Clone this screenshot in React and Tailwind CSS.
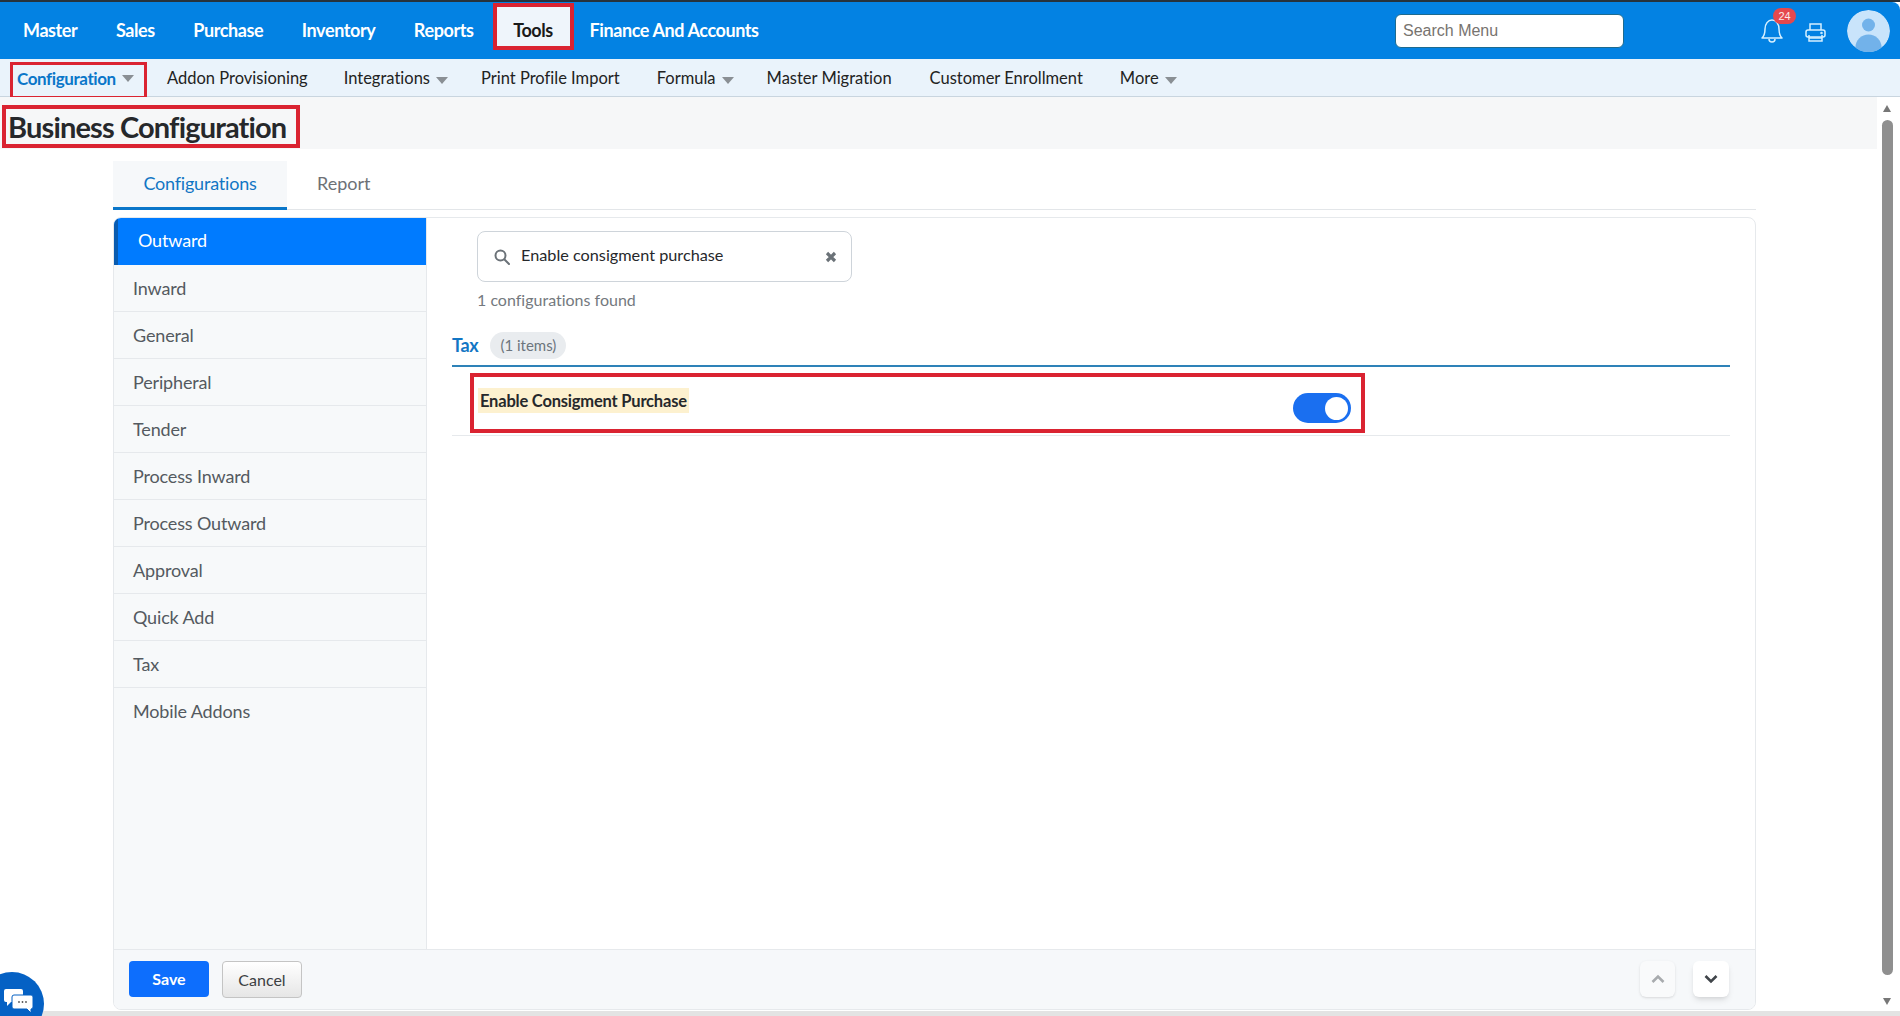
import React from "react";

const Caret = () => (
  <span className="ml-[6px] inline-block w-0 h-0 border-l-[6px] border-r-[6px] border-t-[7px] border-l-transparent border-r-transparent border-t-[#8a8f94] translate-y-[0px]" />
);

const top = ["Master", "Sales", "Purchase", "Inventory", "Reports"];
const side = ["Inward", "General", "Peripheral", "Tender", "Process Inward", "Process Outward", "Approval", "Quick Add", "Tax", "Mobile Addons"];

export default function App() {
  return (
    <div className="relative w-[1900px] h-[1016px] overflow-hidden bg-white font-['Lato',sans-serif] text-[#333] [font-variant-ligatures:none]">
      <div className="h-[2px] bg-[#26323d]" />
      <header className="h-[57px] bg-[#0382e3] flex items-center pl-[23px] pr-[10px] rounded-tr-[8px]">
        <nav className="flex items-center text-white font-bold text-[18px] tracking-[-0.4px]">
          {top.map((t) => (
            <span key={t} className="mr-[38.500px]">{t}</span>
          ))}
          <span className="-ml-[19.500px] mr-[16px] w-[81px] h-[47px] -mt-[9px] pt-[8px] border-[4px] border-[#da2331] bg-[#eff5fb] text-[#1a1a1a] flex items-center justify-center">Tools</span>
          <span>Finance And Accounts</span>
        </nav>
        <div className="ml-auto flex items-center">
          <div className="w-[229px] h-[34px] mr-[137px] bg-white rounded-[6px] border border-[#1e6b8f] pl-[7px] flex items-center font-['Liberation_Sans',sans-serif] text-[16px] text-[#77736f]">Search Menu</div>
          <div className="relative mr-[22px] mt-[1px]">
            <svg className="block" width="22" height="26" viewBox="0 0 22 26" fill="none" stroke="#d6f0ff" strokeWidth="1.500">
              <path d="M1 20c2-2 3-4 3-9 0-5 3-9 7-9s7 4 7 9c0 5 1 7 3 9z" strokeLinejoin="round" />
              <path d="M8 21c0 4 6 4 6 0" />
            </svg>
            <span className="absolute -top-[10px] left-[12px] w-[23px] h-[16px] rounded-full bg-[#e5484d] text-[#fbe9e9] text-[11px] leading-[16px] text-center font-['Liberation_Sans',sans-serif]">24</span>
          </div>
          <svg className="mr-[21px] mt-[3px]" width="21" height="21" viewBox="0 0 21 21" fill="none" stroke="#d6f0ff" strokeWidth="1.500">
            <path d="M5 8V2h11v6" />
            <rect x="1" y="8" width="19" height="7" rx="2" />
            <path d="M4 13v6h13v-6" />
            <path d="M4 16h13" />
            <circle cx="16.500" cy="11" r="0.500" />
          </svg>
          <svg className="rounded-full" width="43" height="42" viewBox="0 0 43 42">
            <ellipse cx="21.500" cy="21" rx="21.500" ry="21" fill="#c9e4fb" />
            <circle cx="21.500" cy="15" r="6.500" fill="#72b2ea" />
            <ellipse cx="21.500" cy="37" rx="13" ry="12.500" fill="#72b2ea" />
          </svg>
        </div>
      </header>
      <div className="h-[38px] bg-[#eaf3fb] border-b border-[#c9d5df] flex items-center pl-[10px] pt-[2px] text-[16.500px] text-[#222]">
        <div className="self-start w-[137px] h-[37px] mt-[1px] pb-[4px] border-[3px] border-[#da2331] flex items-center pl-[4px] text-[17px] text-[#0a76c9] font-bold tracking-[-0.4px] shrink-0">Configuration<Caret /></div>
        <span className="ml-[20px]">Addon Provisioning</span>
        <span className="ml-[36px]">Integrations<Caret /></span>
        <span className="ml-[33px]">Print Profile Import</span>
        <span className="ml-[37px]">Formula<Caret /></span>
        <span className="ml-[33px]">Master Migration</span>
        <span className="ml-[38px]">Customer Enrollment</span>
        <span className="ml-[37px]">More<Caret /></span>
      </div>
      <div className="flex h-[915px]">
        <main className="w-[1877px]">
          <div className="h-[52px] bg-[#f6f7f8] pl-[2px] pt-[8px]">
            <h1 className="w-[298px] h-[43px] border-[4px] border-[#da2331] pl-[2px] flex items-center text-[29px] font-bold tracking-[-0.85px] text-[#26282b] whitespace-nowrap">Business Configuration</h1>
          </div>
          <div className="ml-[113px] w-[1643px]">
            <div className="mt-[12px] h-[49px] flex border-b border-[#e3e6e9] text-[18px]">
              <div className="w-[174px] h-[49px] pb-[2px] bg-[#f6f8fa] border-b-[3px] border-[#0a76c9] flex items-center justify-center text-[#1276c4] tracking-[-0.2px]">Configurations</div>
              <div className="ml-[30px] h-[47px] pb-[2px] flex items-center text-[#6d7176]">Report</div>
            </div>
            <div className="mt-[7px] h-[793px] border border-[#e6e9ec] rounded-[8px] overflow-hidden flex flex-col">
              <div className="flex flex-1">
                <aside className="w-[313px] bg-[#f7f9fa] border-r border-[#e6e9ec] text-[18px] tracking-[-0.15px] text-[#545a60]">
                  <div className="h-[47px] bg-[#007bff] text-white border-l-[4px] border-[#0a5cb0] pl-[20px] pb-[2px] flex items-center">Outward</div>
                  {side.map((s, i) => (
                    <div key={s} className={i === side.length - 1 ? "h-[47px] pl-[19px] flex items-center" : "h-[47px] pl-[19px] flex items-center border-b border-[#e6e9ec]"}>{s}</div>
                  ))}
                </aside>
                <section className="flex-1 pl-[25px] pr-[25px]">
                  <div className="ml-[25px] mt-[13px] w-[375px] h-[51px] border border-[#ced4da] rounded-[8px] flex items-center pl-[16px] pr-[14px] text-[16.250px] text-[#26282b]">
                    <svg width="16" height="16" viewBox="0 0 16 16" fill="none" stroke="#6b7278" strokeWidth="2">
                      <circle cx="6.500" cy="6.500" r="5" />
                      <path d="M10.500 10.500L15 15" strokeLinecap="round" />
                    </svg>
                    <span className="ml-[11px] -mt-[2px]">Enable consigment purchase</span>
                    <svg className="ml-auto" width="12" height="12" viewBox="0 0 12 12" stroke="#6b7278" strokeWidth="3.200">
                      <path d="M2 2l8 8M10 2l-8 8" />
                    </svg>
                  </div>
                  <p className="ml-[25px] mt-[8px] text-[16px] leading-[20px] text-[#74797e]">1 configurations found</p>
                  <div className="mt-[14px] h-[43px] pt-[8px] border-b-[2px] border-[#2e82b8] flex items-start">
                    <span className="h-[27px] leading-[27px] text-[18px] font-bold tracking-[-0.3px] text-[#1276c4]">Tax</span>
                    <span className="ml-[12px] h-[27px] px-[10px] rounded-full bg-[#e9ecef] text-[15px] leading-[27px] text-[#6c757d]">(1 items)</span>
                  </div>
                  <div className="h-[69px] border-b border-[#e6e9ec] pt-[6px]">
                    <div className="ml-[18px] w-[895px] h-[60px] border-[4px] border-[#da2331] flex items-start pl-[4px] pr-[10px]">
                      <span className="mt-[11px] h-[25px] bg-[#fdf1cf] px-[2px] pt-[1px] text-[16.500px] leading-[25px] font-bold tracking-[-0.2px] text-[#26282b]">Enable Consigment Purchase</span>
                      <span className="ml-auto mt-[16px] w-[58px] h-[30px] rounded-full bg-[#1a6ff0] flex items-center justify-end pr-[3px]">
                        <span className="w-[23px] h-[23px] rounded-full bg-white" />
                      </span>
                    </div>
                  </div>
                </section>
              </div>
              <footer className="h-[60px] bg-[#f6f8fa] border-t border-[#e6e9ec] flex items-start pt-[11px] pl-[15px] pr-[26px] text-[16px]">
                <button className="w-[80px] h-[36px] bg-[#0d6efd] text-white rounded-[4px] font-bold">Save</button>
                <button className="ml-[13px] w-[80px] h-[37px] bg-linear-to-b from-white to-[#e6e6e6] border border-[#c4c4c4] rounded-[4px] text-[#3c3f42]">Cancel</button>
                <button className="ml-auto w-[35px] h-[36px] bg-[#f9fafb] rounded-[6px] shadow-sm flex items-center justify-center">
                  <svg width="14" height="10" viewBox="0 0 14 10" fill="none" stroke="#a8abae" strokeWidth="2.600"><path d="M1.500 8L7 2.500 12.500 8" /></svg>
                </button>
                <button className="ml-[18px] w-[36px] h-[36px] bg-white rounded-[6px] shadow-md flex items-center justify-center">
                  <svg width="14" height="10" viewBox="0 0 14 10" fill="none" stroke="#40454a" strokeWidth="2.600"><path d="M1.500 2L7 7.500 12.500 2" /></svg>
                </button>
              </footer>
            </div>
          </div>
        </main>
        <div className="w-[23px] pr-[3px] bg-white flex flex-col items-center">
          <span className="mt-[8px] w-0 h-0 border-l-[4.500px] border-r-[4.500px] border-b-[7px] border-l-transparent border-r-transparent border-b-[#777]" />
          <span className="mt-[8px] w-[11px] h-[855px] rounded-full bg-[#8f8f8f] shrink-0" />
          <span className="mt-[23px] w-0 h-0 border-l-[4.500px] border-r-[4.500px] border-t-[7px] border-l-transparent border-r-transparent border-t-[#777]" />
        </div>
      </div>
      <div className="absolute left-0 right-0 bottom-0 h-[5px] bg-[#e3e3e3]" />
      <div className="absolute left-[-20px] top-[972px] w-[64px] h-[64px] rounded-full bg-[#0561c4]" />
      <svg className="absolute left-[4px] top-[988px]" width="30" height="26" viewBox="0 0 30 26">
        <path d="M2 1h15a2 2 0 012 2v9a2 2 0 01-2 2H7l-4 4v-4H2a2 2 0 01-2-2V3a2 2 0 012-2z" fill="#fff" />
        <path d="M10 7h17a2 2 0 012 2v10a2 2 0 01-2 2v4l-4-4H10a2 2 0 01-2-2V9a2 2 0 012-2z" fill="#fff" stroke="#0561c4" strokeWidth="1" />
        <circle cx="15" cy="14" r="0.900" fill="#555" /><circle cx="18.500" cy="14" r="0.900" fill="#555" /><circle cx="22" cy="14" r="0.900" fill="#555" />
      </svg>
    </div>
  );
}
